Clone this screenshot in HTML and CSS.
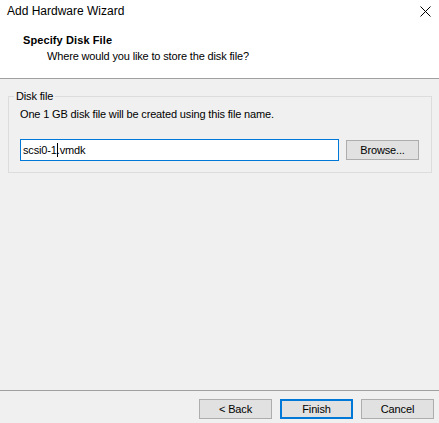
FILE: index.html
```html
<!DOCTYPE html>
<html>
<head>
<meta charset="utf-8">
<link rel="stylesheet" href="styles.css">
</head>
<body>
<div class="window">
  <div class="top">
    <div class="titlebar">
      <span class="title">Add Hardware Wizard</span>
      <svg class="close" width="11" height="11" viewBox="0 0 11 11"><path d="M0.5 0.5 L10.5 10.5 M10.5 0.5 L0.5 10.5" stroke="#000" stroke-width="1" fill="none"/></svg>
    </div>
    <div class="head">
      <div class="h-title">Specify Disk File</div>
      <div class="h-sub">Where would you like to store the disk file?</div>
    </div>
  </div>
  <div class="body">
    <fieldset class="group">
      <legend>Disk file</legend>
      <div class="desc">One 1 GB disk file will be created using this file name.</div>
      <div class="row">
        <div class="textbox">scsi0-1<span class="caret"></span>.vmdk</div>
        <div class="btn">Browse...</div>
      </div>
    </fieldset>
  </div>
  <div class="footer">
    <div class="btn">&lt; Back</div>
    <div class="btn default">Finish</div>
    <div class="btn">Cancel</div>
  </div>
</div>
</body>
</html>
```
FILE: styles.css
```css
html, body {
  margin: 0;
  padding: 0;
  background: #f0f0f0;
}
.window {
  width: 439px;
  height: 423px;
  display: flex;
  flex-direction: column;
  font-family: "Liberation Sans", Arial, sans-serif;
  font-size: 11px;
  line-height: 13px;
  letter-spacing: -0.15px;
  color: #000;
  overflow: hidden;
}
.top {
  background: #fff;
  height: 79px;
  border-bottom: 1px solid #a0a0a0;
  box-sizing: border-box;
  flex: none;
}
.titlebar {
  height: 30px;
  display: flex;
  align-items: flex-start;
  justify-content: space-between;
  padding: 3px 8px 0 7px;
  box-sizing: border-box;
}
.title {
  font-size: 12px;
  line-height: 16px;
  letter-spacing: 0;
}
.close {
  margin-top: 3px;
}
.head {
  padding: 4px 0 0 23px;
}
.h-title {
  font-weight: bold;
  letter-spacing: 0.1px;
}
.h-sub {
  padding-left: 24px;
  margin-top: 3px;
}
.body {
  flex: 1;
  padding: 11px 7px 0 8px;
}
.group {
  margin: 0;
  border: 1px solid #dcdcdc;
  padding: 5px 11px 11px 11px;
  min-width: 0;
}
.group legend {
  padding: 0 2px;
  margin-left: -6px;
}
.desc {
  margin-bottom: 18px;
}
.row {
  display: flex;
  align-items: center;
  gap: 7px;
}
.textbox {
  width: 319px;
  height: 22px;
  box-sizing: border-box;
  border: 1px solid #0078d7;
  background: #fff;
  padding: 0 0 0 2px;
  line-height: 20px;
  white-space: nowrap;
}
.caret {
  display: inline-block;
  width: 1px;
  height: 14px;
  background: #000;
  vertical-align: -3px;
  margin-right: -1px;
}
.btn {
  width: 73px;
  height: 20px;
  box-sizing: border-box;
  border: 1px solid #adadad;
  background: #e1e1e1;
  text-align: center;
  line-height: 18px;
  flex: none;
}
.btn.default {
  border: 2px solid #0078d7;
  line-height: 16px;
}
.footer {
  flex: none;
  height: 33px;
  box-sizing: border-box;
  border-top: 1px solid #a0a0a0;
  display: flex;
  justify-content: flex-end;
  align-items: flex-start;
  gap: 8px;
  padding: 8px 5px 0 0;
}
```
